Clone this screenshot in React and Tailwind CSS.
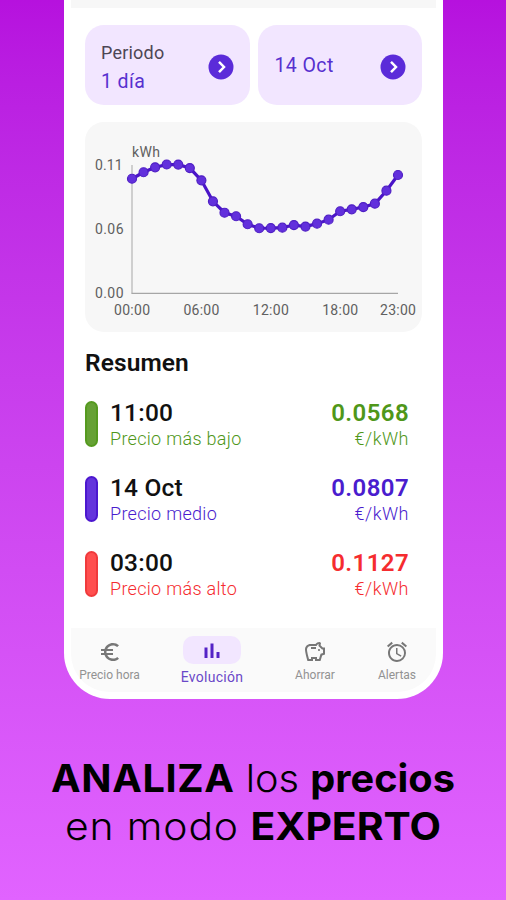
import { MdAlarm, MdEuroSymbol, MdOutlineSavings } from 'react-icons/md';

const PRICES = [
  0.1002, 0.1059, 0.1102, 0.1127, 0.1126, 0.1096, 0.0988, 0.0804, 0.0704, 0.0673, 0.0603, 0.0568,
  0.0569, 0.0573, 0.0596, 0.0583, 0.0608, 0.0643, 0.0717, 0.0734, 0.0754, 0.0783, 0.0897, 0.1035,
];

const X_LABELS = [
  { hour: 0, label: '00:00' },
  { hour: 6, label: '06:00' },
  { hour: 12, label: '12:00' },
  { hour: 18, label: '18:00' },
  { hour: 23, label: '23:00' },
];

const SUMMARY = [
  { title: '11:00', label: 'Precio más bajo', price: '0.0568', text: 'text-[#4f9719]', bar: 'bg-[#66a135] border-[#559a1f]' },
  { title: '14 Oct', label: 'Precio medio', price: '0.0807', text: 'text-[#4a1cce]', bar: 'bg-[#6434dc] border-[#4c17cf]' },
  { title: '03:00', label: 'Precio más alto', price: '0.1127', text: 'text-[#f52c2f]', bar: 'bg-[#ff4f4f] border-[#f03a3c]' },
];

const chartX = (hour) => 47 + hour * 11.565;
const chartY = (price) => 171 - (price / 0.1127) * 128.5;

export default function App() {
  return (
    <main className="h-[900px] w-[506px] overflow-hidden bg-linear-to-b from-[#b611de] to-[#e163ff] font-['Roboto',sans-serif]">
      <section className="ml-16 flex h-[699px] w-[379px] flex-col rounded-b-[46px] bg-white px-[7px] pb-[7px]">
        <div className="h-2 shrink-0 bg-[#f7f7f7]" />
        <div className="flex flex-1 flex-col pt-[17px] pr-3.5 pl-3.5">
          <div className="flex gap-2">
            <Picker label="Periodo" value="1 día" />
            <Picker value="14 Oct" />
          </div>
          <PriceChart />
          <h2 className="mt-4 text-[24.500px] leading-[30px] font-semibold tracking-[0.1px] text-[#111]">Resumen</h2>
          <div className="mt-[21px] flex flex-col gap-[23px] pr-[13px]">
            {SUMMARY.map((item) => (
              <SummaryRow key={item.label} item={item} />
            ))}
          </div>
        </div>
        <BottomNav />
      </section>

      <h1 className="mt-[55px] text-center font-['Inter',sans-serif] text-[38px] leading-[48px] text-black">
        <span className="block scale-x-[1.045]">
          <b className="tracking-[0.6px]">ANALIZA</b> <span className="font-light">los</span> <b>precios</b>
        </span>
        <span className="block scale-x-[1.075]">
          <span className="font-light tracking-[0.8px]">en modo</span> <b>EXPERTO</b>
        </span>
      </h1>
    </main>
  );
}

function Picker({ label, value }) {
  return (
    <div className="flex h-20 flex-1 items-center justify-between rounded-[19px] bg-[#f2e6ff] px-4">
      <div className={label ? 'pt-1' : 'pl-px'}>
        {label && <div className="text-[18px] leading-[29px] tracking-[0.2px] text-[#4d4655]">{label}</div>}
        <div className="text-[19.500px] leading-[29px] font-[450] tracking-[0.4px] text-[#5730cf]">{value}</div>
      </div>
      <svg className="mt-1 size-[26px]" viewBox="0 0 26 26" fill="none">
        <circle cx="13" cy="13" r="12.5" fill="#5b2bd9" />
        <path d="M11 7.8 16 13l-5 5.2" stroke="white" strokeWidth="2.5" />
      </svg>
    </div>
  );
}

function PriceChart() {
  const points = PRICES.map((price, hour) => `${chartX(hour)},${chartY(price)}`).join(' ');

  return (
    <div className="mt-[17px] h-[210px] rounded-[19px] bg-[#f7f7f7]">
      <svg className="h-[210px] w-[338px]" viewBox="0 0 338 210">
        <path d="M47 43v128.5" stroke="#cfcfcf" strokeWidth="2" />
        <path d="M46.5 171.3H313" stroke="#a6a6a6" strokeWidth="1.2" />
        <g fill="#606060" fontSize="14">
          <text x="47" y="35" textLength="28">kWh</text>
          <text x="10" y="47.500" textLength="27.500">0.11</text>
          <text x="10" y="112" textLength="28.500">0.06</text>
          <text x="10" y="176" textLength="28.500">0.00</text>
          {X_LABELS.map(({ hour, label }) => (
            <text key={label} x={chartX(hour) - 18} y="193" textLength="36">{label}</text>
          ))}
        </g>
        <polyline points={points} fill="none" stroke="#4a14c8" strokeWidth="3.2" />
        {PRICES.map((price, hour) => (
          <circle key={hour} cx={chartX(hour)} cy={chartY(price)} r="4.5" fill="#6230dc" stroke="#4f1fc4" strokeWidth="1.2" />
        ))}
      </svg>
    </div>
  );
}

function SummaryRow({ item }) {
  return (
    <div className="flex h-[52px] items-start">
      <div className={`mt-0.5 h-[46px] w-[13px] rounded-full border-2 ${item.bar}`} />
      <div className="ml-3 flex-1">
        <div className="text-[24.500px] leading-[28px] font-medium tracking-[0.2px] text-[#111]">{item.title}</div>
        <div className={`text-[18px] leading-[23px] font-[350] tracking-[0.3px] ${item.text}`}>{item.label}</div>
      </div>
      <div className={`text-right ${item.text}`}>
        <div className="text-[24px] leading-[28px] font-semibold tracking-[0.4px]">{item.price}</div>
        <div className="text-[18px] leading-[23px] font-[350] tracking-[0.5px]">€/kWh</div>
      </div>
    </div>
  );
}

function BottomNav() {
  return (
    <nav className="flex h-16 shrink-0 rounded-b-[38px] bg-[#fafafa] text-[12px] leading-4 text-[#929292]">
      <div className="flex w-[77px] flex-col items-center pt-3">
        <MdEuroSymbol className="size-6 text-[#777]" />
        <span className="mt-[3px]">Precio hora</span>
      </div>
      <div className="flex w-32 flex-col items-center pt-2">
        <span className="flex h-7 w-[58px] items-center justify-center rounded-[10px] bg-[#f2e6ff]">
          <svg className="mt-px size-4" viewBox="0 0 16 16" fill="#5423c6">
            <path d="M.500 4.500h3V15h-3zM6.500.500h3V15h-3zM12.500 9h3v6h-3z" />
          </svg>
        </span>
        <span className="mt-[5px] text-[14px] tracking-[0.3px] text-[#6a48c8]">Evolución</span>
      </div>
      <div className="flex w-[78px] flex-col items-center pt-3">
        <MdOutlineSavings className="size-6 text-[#777]" />
        <span className="mt-[3px]">Ahorrar</span>
      </div>
      <div className="ml-1 flex flex-1 flex-col items-center pt-3">
        <MdAlarm className="size-6 text-[#777]" />
        <span className="mt-[3px]">Alertas</span>
      </div>
    </nav>
  );
}
